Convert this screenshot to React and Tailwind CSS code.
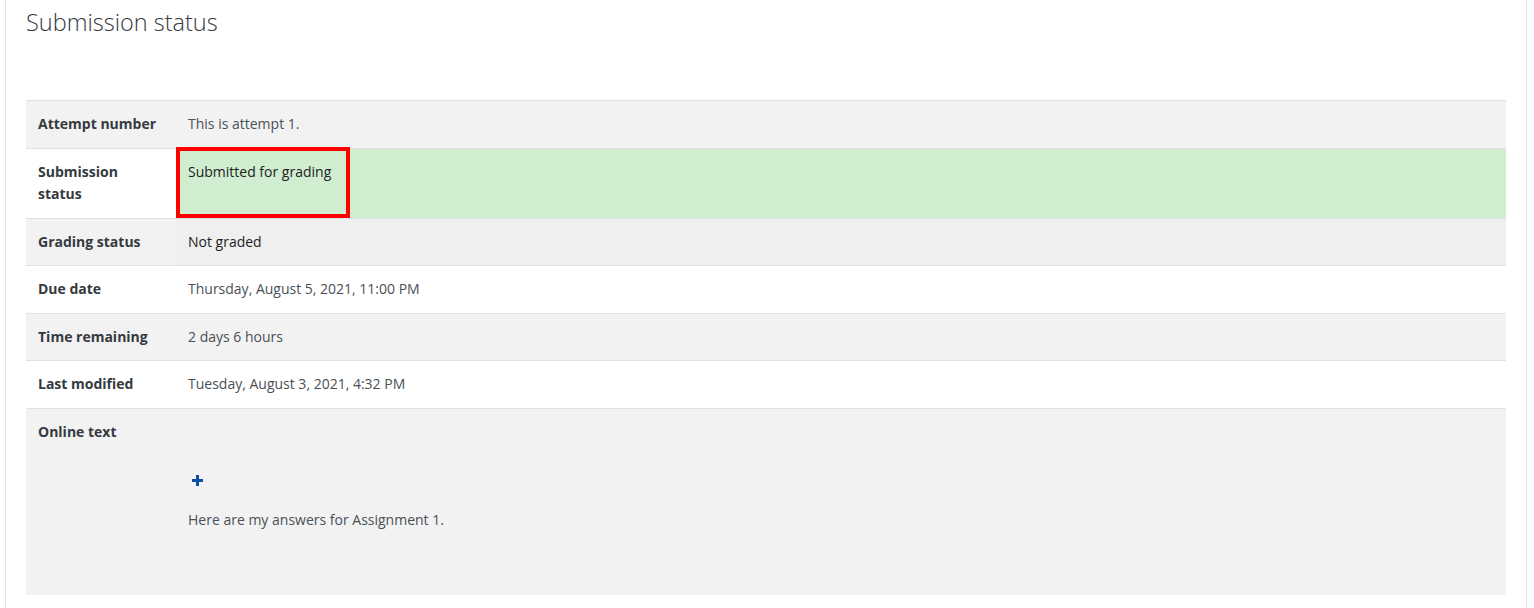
import React from "react";

const rows = [
  { label: "Attempt number", value: "This is attempt 1.", bg: "bg-[#f2f2f2]", vcls: "text-[#495057]" },
  { label: "Submission status", value: "Submitted for grading", bg: "bg-white", special: "submitted" },
  { label: "Grading status", value: "Not graded", bg: "bg-[#f2f2f2]", vbg: "bg-[#efefef]", vcls: "text-[#1d2125]" },
  { label: "Due date", value: "Thursday, August 5, 2021, 11:00 PM", bg: "bg-white", vcls: "text-[#495057]" },
  { label: "Time remaining", value: "2 days 6 hours", bg: "bg-[#f2f2f2]", vcls: "text-[#495057]" },
  { label: "Last modified", value: "Tuesday, August 3, 2021, 4:32 PM", bg: "bg-white", vcls: "text-[#495057]" },
];

export default function App() {
  return (
    <div
      className="min-h-[608px] bg-white"
      style={{ fontFamily: '"Open Sans", "Noto Sans", sans-serif' }}
    >
      <div className="ml-[5px] mr-[7px] h-[608px] border-x border-[#e3e3e6] pl-[20px] pr-[20px]">
        <h2 className="pt-[4px] text-[23.5px] font-light leading-[36px] text-[#343a40]">
          Submission status
        </h2>
        <div className="mt-[60px] border-t border-[#dee2e6] text-[14px] leading-[22.5px]">
          {rows.map((r) => (
            <div key={r.label} className={`flex border-b border-[#dee2e6] ${r.bg}`}>
              <div className="w-[150px] shrink-0 p-3 font-bold text-[#343a40]">
                {r.label === "Submission status" ? (
                  <>
                    Submission
                    <br />
                    status
                  </>
                ) : (
                  r.label
                )}
              </div>
              {r.special === "submitted" ? (
                <div className="relative flex flex-1 bg-[#d0eecf]">
                  <div className="relative -top-[2px] -mb-[2px] w-[174px] border-4 border-[#ff0000] px-2 pb-3 pt-[10px] text-[#1d2125]">
                    {r.value}
                  </div>
                </div>
              ) : (
                <div className={`flex-1 p-3 ${r.vbg || ""} ${r.vcls}`}>{r.value}</div>
              )}
            </div>
          ))}
          <div className="flex bg-[#f2f2f2]">
            <div className="w-[150px] shrink-0 p-3 font-bold text-[#343a40]">Online text</div>
            <div className="flex-1 p-3 text-[#495057]">
              <div className="mt-[49px] flex h-[22.5px] items-center pl-[4px]">
                <svg width="11" height="11" viewBox="0 0 11 11">
                  <path d="M4 0h3v4h4v3H7v4H4V7H0V4h4z" fill="#0f4ea3" />
                </svg>
              </div>
              <div className="mt-[16.5px] mb-[52px]">Here are my answers for Assignment 1.</div>
            </div>
          </div>
        </div>
      </div>
    </div>
  );
}
